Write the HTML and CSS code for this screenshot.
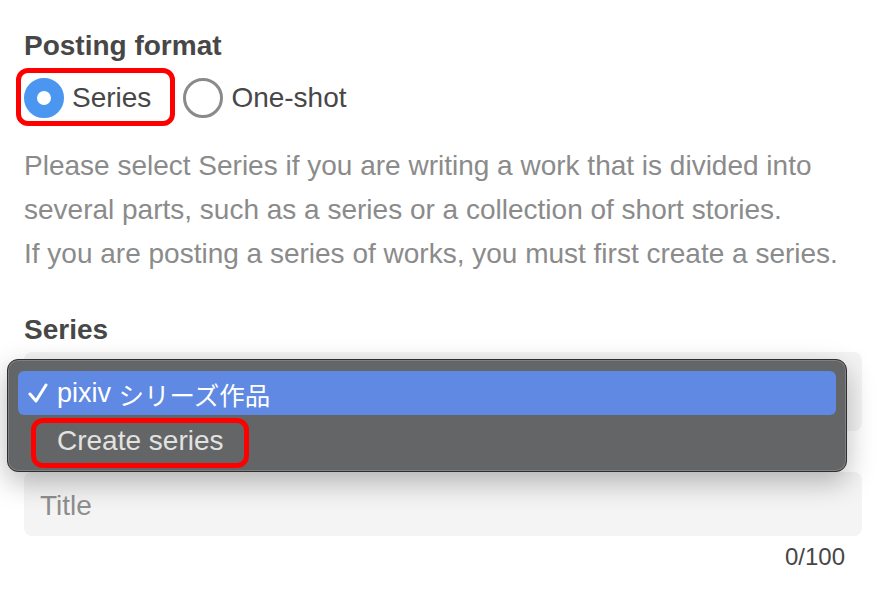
FILE: index.html
```html
<html>
<head>
<link rel="stylesheet" href="styles.css">
</head>
<body>
<div class="page">
	<div class="label first">Posting format</div>
	<div class="radios">
		<label class="radio on"><span class="dot"></span>Series<span class="mark"></span></label>
		<label class="radio"><span class="dot"></span>One-shot</label>
	</div>
	<p class="note">Please select Series if you are writing a work that is divided into several parts, such as a series or a collection of short stories.<br>If you are posting a series of works, you must first create a series.</p>

	<div class="label">Series</div>
	<div class="select_wrap">
		<div class="select"></div>
		<div class="menu">
			<div class="item active">
				<span class="check"><svg width="20" height="22" viewBox="0 0 20 22"><polyline points="2,12 8,19 18,3" fill="none" stroke="#fff" stroke-width="3" stroke-linecap="round" stroke-linejoin="round"/></svg></span>pixiv&nbsp;<span class="jp">シリーズ作品</span>
			</div>
			<div class="item second">
				<span class="check"></span>Create series<span class="mark"></span>
			</div>
		</div>
	</div>
	<div class="input">Title</div>
	<div class="count">0/100</div>
</div>
</body>
</html>
```

FILE: styles.css
```css
body {
	margin: 0;
	background: #ffffff;
	font-family: "Liberation Sans", "Noto Sans CJK JP", sans-serif;
	color: #474747;
}
.page {
	padding: 0 20px 0 24px;
	width: 838px;
}
.label {
	font-size: 28px;
	font-weight: bold;
	line-height: 36px;
	margin-top: 36px;
}
.label.first {
	margin-top: 28px;
}
.radios {
	display: flex;
	gap: 32px;
	margin-top: 14px;
}
.radio {
	position: relative;
	display: flex;
	align-items: center;
	gap: 8px;
	font-size: 28px;
	line-height: 40px;
	height: 40px;
}
.dot {
	display: inline-block;
	box-sizing: border-box;
	width: 40px;
	height: 40px;
	border-radius: 50%;
	border: 3px solid #8a8a8a;
	background: #ffffff;
}
.radio.on .dot {
	border: 13px solid #4a96f0;
}
.mark {
	position: absolute;
	box-sizing: border-box;
	border: 5px solid #ff0000;
	border-radius: 12px;
}
.radio .mark {
	left: -8px;
	top: -10px;
	right: -24px;
	bottom: -8px;
}
.note {
	margin: 26px 0 0 0;
	font-size: 28px;
	line-height: 44px;
	color: #8b8b8b;
}
.select_wrap {
	position: relative;
	margin-top: 4px;
}
.select {
	height: 79px;
	background: #f4f4f4;
	border-radius: 8px;
}
.menu {
	position: absolute;
	left: -17px;
	top: 7px;
	width: 840px;
	height: 113px;
	box-sizing: border-box;
	padding: 11px 10px;
	background: #646566;
	border: 1px solid #2f2f30;
	border-radius: 11px;
	box-shadow: inset 0 0 0 1px rgba(255,255,255,0.18), 0 10px 28px rgba(0,0,0,0.28);
}
.item {
	position: relative;
	display: flex;
	align-items: center;
	height: 44px;
	padding-left: 10px;
	border-radius: 6px;
	font-size: 27px;
	color: #e2e2e2;
}
.item.active {
	background: #5f89e2;
	color: #ffffff;
}
.item.second {
	font-size: 28px;
	padding-top: 5px;
	box-sizing: border-box;
	height: 46px;
}
.jp {
	font-size: 25.5px;
}
.check {
	display: inline-flex;
	width: 29px;
}
.item .mark {
	left: 13px;
	top: 3px;
	width: 218px;
	height: 50px;
}
.input {
	margin-top: 41px;
	height: 64px;
	box-sizing: border-box;
	padding: 3px 16px 0 16px;
	line-height: 61px;
	background: #f4f4f4;
	border-radius: 8px;
	font-size: 28px;
	color: #8e8e8e;
}
.count {
	margin-top: 5px;
	padding-right: 17px;
	text-align: right;
	font-size: 24px;
	line-height: 32px;
	color: #474747;
}
```
